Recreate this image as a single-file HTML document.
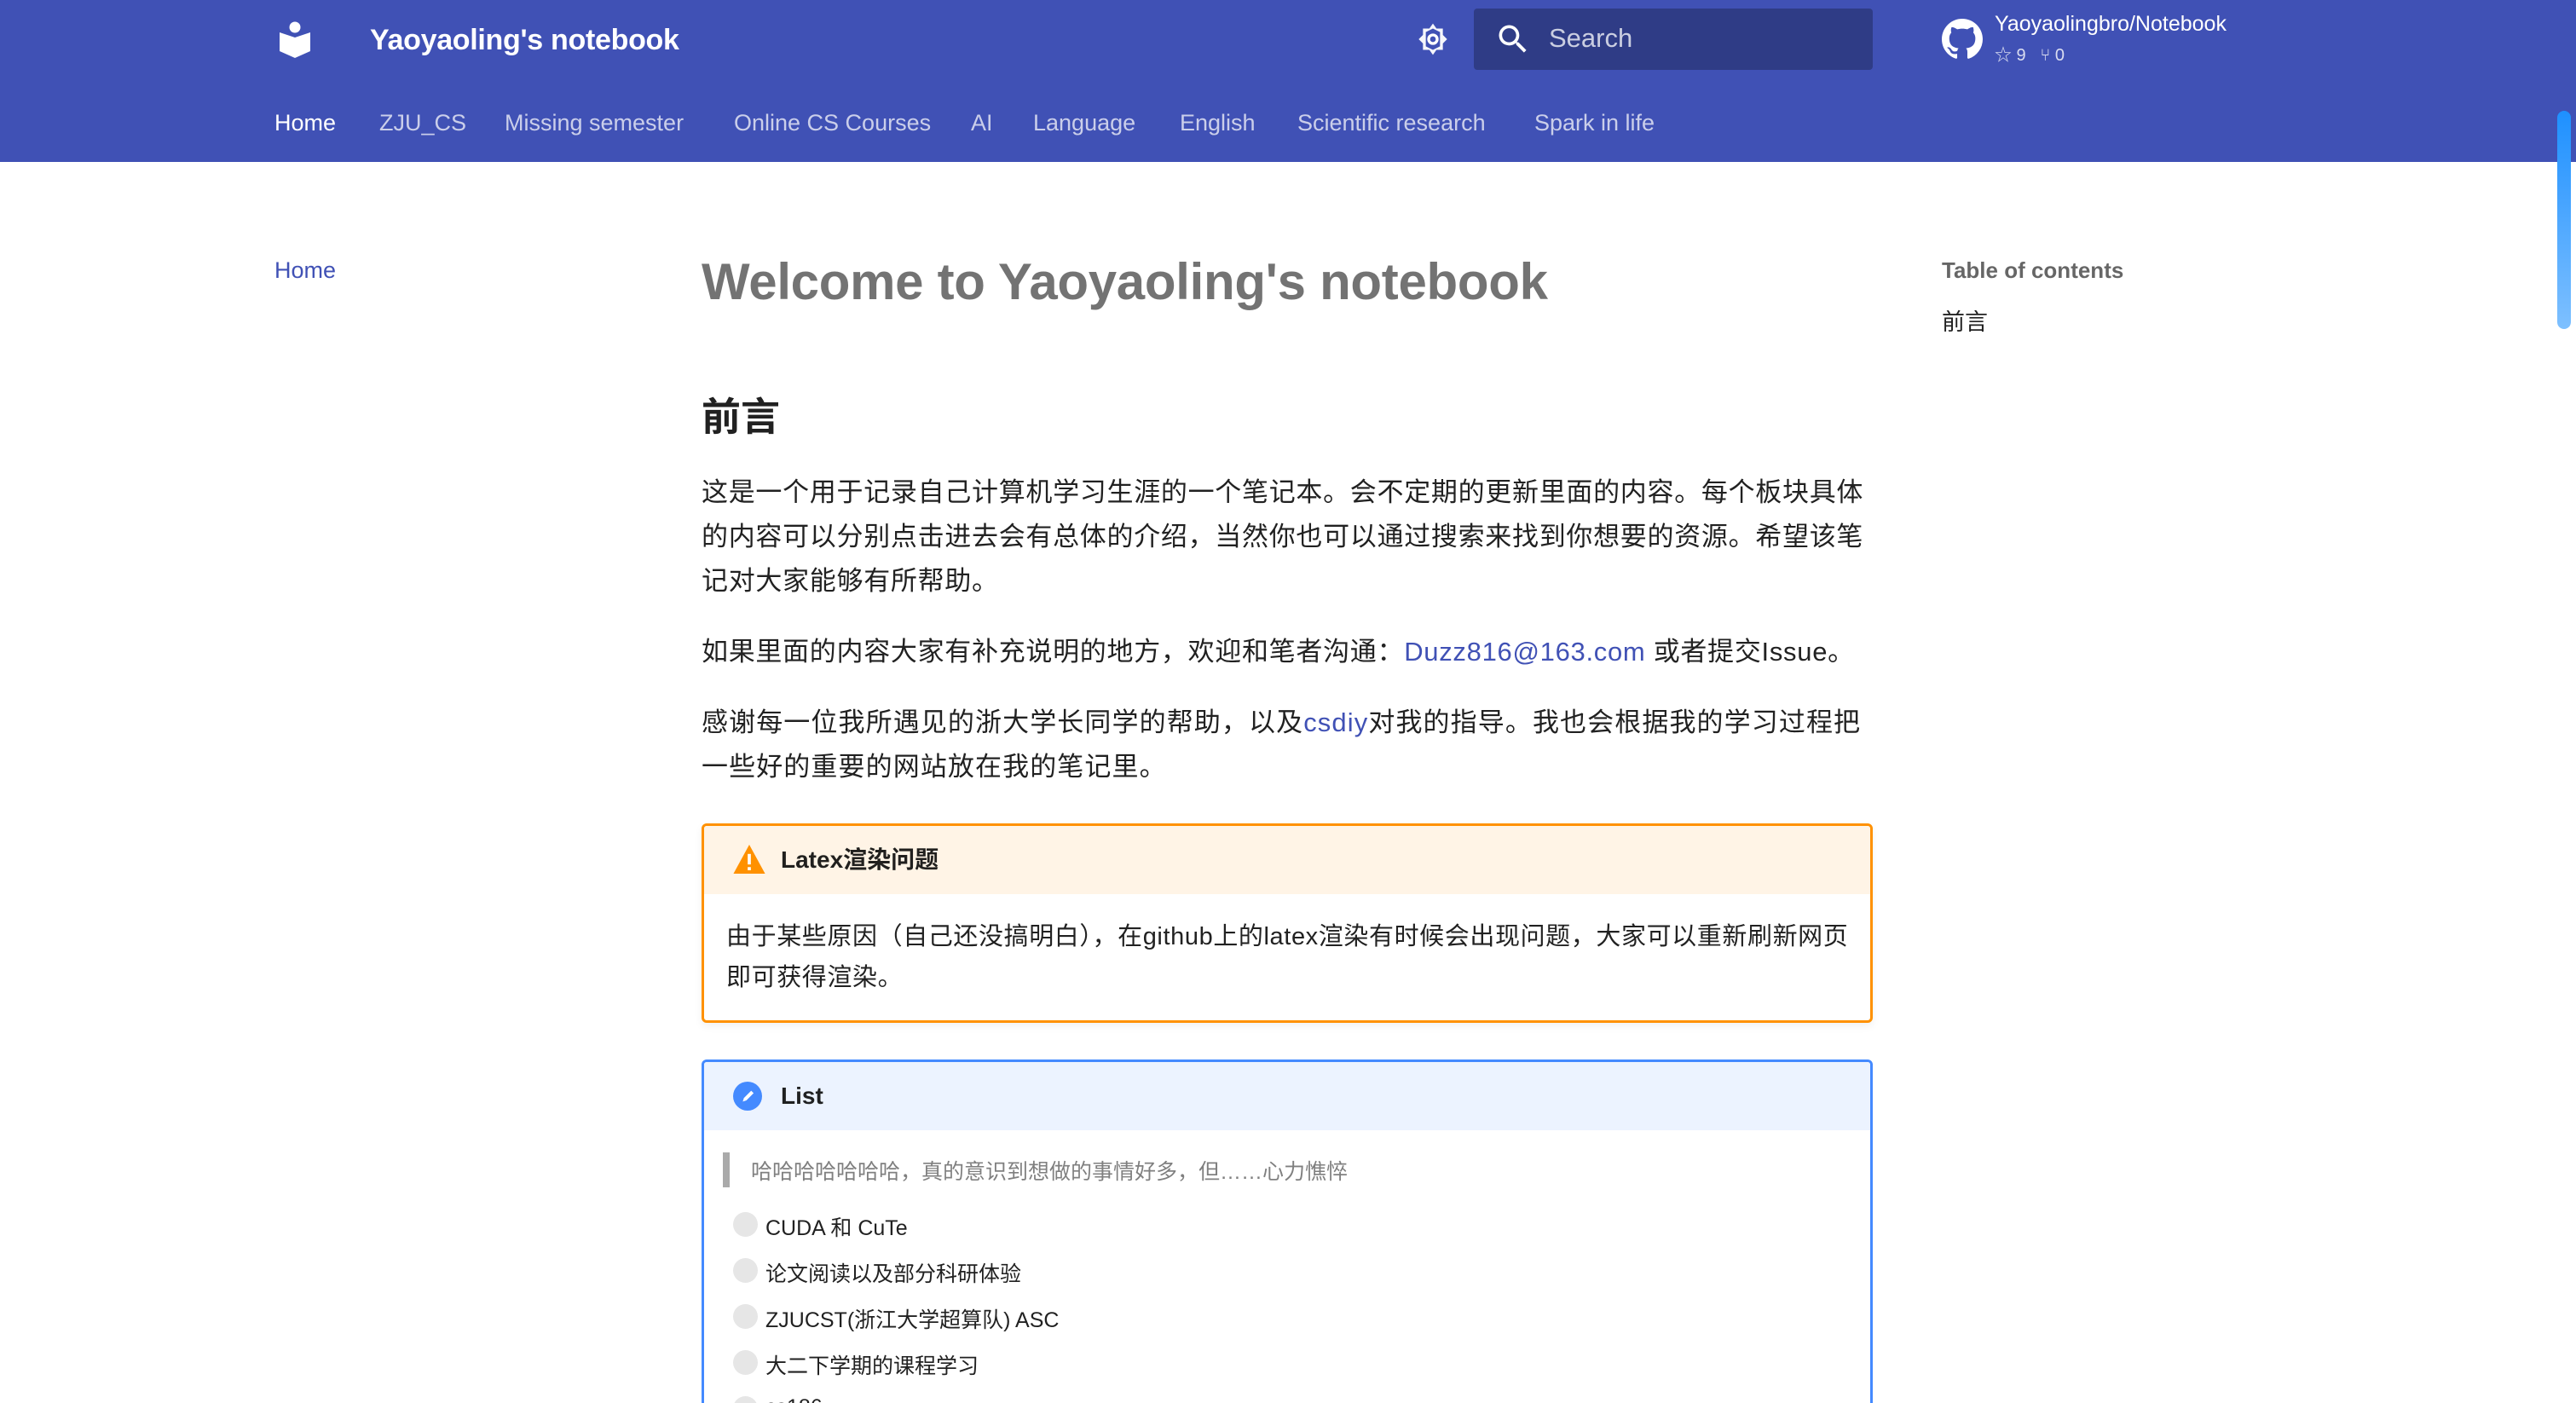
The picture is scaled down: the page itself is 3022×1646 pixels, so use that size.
<!DOCTYPE html>
<html><head><meta charset="utf-8">
<style>
*{margin:0;padding:0;box-sizing:border-box}
html,body{width:3022px;height:1646px;overflow:hidden;background:#fff;font-family:"Liberation Sans","Noto Sans CJK SC",sans-serif;color:rgba(0,0,0,.87)}
#w{position:relative;width:3022px;height:1646px;overflow:hidden}
.hdr{position:absolute;left:0;top:0;width:3022px;height:190px;background:#4051b5}
.abs{position:absolute;white-space:nowrap}
.title{left:434px;top:28px;font-size:34px;font-weight:700;color:#fff;letter-spacing:-0.3px}
.search{left:1729px;top:10px;width:468px;height:72px;background:rgba(0,0,0,.26);border-radius:4px}
.search span{position:absolute;left:88px;top:17px;font-size:31px;color:rgba(255,255,255,.75)}
.nav{top:129px;font-size:27px;color:rgba(255,255,255,.72)}
.repo{left:2340px;top:14px;font-size:25px;color:#fff}
.stats{left:2340px;top:48px;font-size:20px;color:rgba(255,255,255,.8)}
.p{left:823px;font-size:31px;line-height:52px;width:1382px;white-space:normal;letter-spacing:0.7px}
a{color:#4051b5;text-decoration:none}
.adm{position:absolute;left:823px;width:1374px;border-radius:6px;overflow:hidden;box-shadow:0 4px 10px rgba(0,0,0,.06)}
.adm .t{height:80px;font-size:28px;font-weight:700;padding-left:90px;line-height:80px;position:relative}
.cb{position:absolute;left:860px;width:29px;height:29px;border-radius:50%;background:#e6e6e6}
.li{left:898px;font-size:25px}
</style></head><body><div id="w">
<div class="hdr"></div>
<svg class="abs" style="left:326px;top:24px" width="42" height="46" viewBox="0 0 42 46">
<circle cx="20" cy="8" r="6.5" fill="#fff"/>
<path d="M2 14 L20 20 L38 14 L38 36 L20 44 L2 36 Z" fill="#fff"/>
</svg>
<div class="abs title">Yaoyaoling's notebook</div>
<svg class="abs" style="left:1661px;top:26px" width="40" height="40" viewBox="0 0 24 24"><path fill="#fff" d="M12 8a4 4 0 1 1 0 8 4 4 0 0 1 0-8m0 2a2 2 0 1 0 0 4 2 2 0 0 0 0-4M12 1l2.5 3.5H19v4.5l3 3-3 3v4.5h-4.5L12 23l-2.5-3.5H5V15l-3-3 3-3V4.5h4.5Z" opacity=".95"/><path fill="#4051b5" d="M12 4.5 7 7v10l5 2.5 5-2.5V7Z"/><circle cx="12" cy="12" r="4" fill="#fff"/><circle cx="12" cy="12" r="2" fill="#4051b5"/></svg>
<div class="abs search">
<svg style="position:absolute;left:24px;top:14px" width="44" height="44" viewBox="0 0 24 24"><path fill="#fff" d="M9.5 3A6.5 6.5 0 0 1 16 9.5c0 1.61-.59 3.09-1.56 4.23l.27.27h.79l5 5-1.5 1.5-5-5v-.79l-.27-.27A6.516 6.516 0 0 1 9.5 16 6.5 6.5 0 0 1 3 9.5 6.5 6.5 0 0 1 9.5 3m0 2C7 5 5 7 5 9.5S7 14 9.5 14 14 12 14 9.5 12 5 9.5 5Z"/></svg>
<span>Search</span></div>
<svg class="abs" style="left:2278px;top:22px" width="48" height="48" viewBox="0 0 16 16"><path fill="#fff" d="M8 0C3.58 0 0 3.58 0 8c0 3.54 2.29 6.53 5.47 7.590.4.07.55-.17.55-.38 0-.19-.01-.82-.01-1.49-2.01.37-2.53-.49-2.69-.94-.09-.23-.48-.94-.82-1.13-.28-.15-.68-.52-.01-.53.63-.01 1.08.58 1.23.82.72 1.21 1.87.87 2.33.66.07-.52.28-.87.51-1.07-1.78-.2-3.64-.89-3.64-3.95 0-.87.31-1.59.82-2.15-.08-.2-.36-1.02.08-2.12 0 0 .67-.21 2.2.82.64-.18 1.32-.27 2-.27.68 0 1.36.09 2 .27 1.53-1.04 2.2-.82 2.2-.82.44 1.1.16 1.92.08 2.12.51.56.82 1.27.82 2.15 0 3.07-1.87 3.75-3.65 3.95.29.25.54.73.54 1.48 0 1.07-.01 1.93-.01 2.2 0 .21.15.46.55.38A8.013 8.013 0 0 0 16 8c0-4.42-3.58-8-8-8Z"/></svg>
<div class="abs repo">Yaoyaolingbro/Notebook</div>
<div class="abs stats">☆ 9 &nbsp;&nbsp;⑂ 0</div>
<div class="abs nav" style="left:322px;color:#fff">Home</div>
<div class="abs nav" style="left:445px">ZJU_CS</div>
<div class="abs nav" style="left:592px">Missing semester</div>
<div class="abs nav" style="left:861px">Online CS Courses</div>
<div class="abs nav" style="left:1139px">AI</div>
<div class="abs nav" style="left:1212px">Language</div>
<div class="abs nav" style="left:1384px">English</div>
<div class="abs nav" style="left:1522px">Scientific research</div>
<div class="abs nav" style="left:1800px">Spark in life</div>
<div class="abs" style="right:6px;top:130px;width:16px;height:256px;border-radius:8px;background:linear-gradient(#1e90ff,#7ec0ff)"></div>

<div class="abs" style="left:322px;top:302px;font-size:27px;color:#4051b5">Home</div>
<div class="abs" style="left:2278px;top:302px;font-size:26px;font-weight:700;color:rgba(0,0,0,.6)">Table of contents</div>
<div class="abs" style="left:2278px;top:356px;font-size:27px">前言</div>

<div class="abs" style="left:823px;top:296px;font-size:60px;font-weight:700;color:rgba(0,0,0,.55);letter-spacing:-0.3px">Welcome to Yaoyaoling's notebook</div>
<div class="abs" style="left:823px;top:453px;font-size:46px;font-weight:700">前言</div>
<div class="abs p" style="top:552px">这是一个用于记录自己计算机学习生涯的一个笔记本。会不定期的更新里面的内容。每个板块具体的内容可以分别点击进去会有总体的介绍，当然你也可以通过搜索来找到你想要的资源。希望该笔记对大家能够有所帮助。</div>
<div class="abs p" style="top:739px">如果里面的内容大家有补充说明的地方，欢迎和笔者沟通：<a>Duzz816@163.com</a> 或者提交Issue。</div>
<div class="abs p" style="top:822px;letter-spacing:1.1px">感谢每一位我所遇见的浙大学长同学的帮助，以及<a>csdiy</a>对我的指导。我也会根据我的学习过程把一些好的重要的网站放在我的笔记里。</div>

<div class="adm" style="top:966px;height:234px;border:3px solid #ff9100">
<div class="t" style="background:#fff4e6">
<svg style="position:absolute;left:34px;top:22px" width="38" height="34" viewBox="0 0 24 22"><path fill="#ff9100" d="M12 0 24 22H0Z"/><rect x="10.8" y="7" width="2.4" height="8" fill="#fff"/><rect x="10.8" y="17" width="2.4" height="2.4" fill="#fff"/></svg>
Latex渲染问题</div>
<div style="padding:26px 24px 0 26px;font-size:29px;line-height:48px;letter-spacing:0.6px">由于某些原因（自己还没搞明白），在github上的latex渲染有时候会出现问题，大家可以重新刷新网页即可获得渲染。</div>
</div>

<div class="adm" style="top:1243px;height:420px;border:3px solid #448aff;box-shadow:none">
<div class="t" style="background:#ecf3ff">
<svg style="position:absolute;left:34px;top:23px" width="34" height="34" viewBox="0 0 24 24"><circle cx="12" cy="12" r="12" fill="#448aff"/><path d="M8 16.5l1-3 6-6 2 2-6 6z" fill="#fff"/></svg>
List</div>
</div>
<div class="abs" style="left:848px;top:1352px;width:8px;height:41px;background:#aaa"></div>
<div class="abs" style="left:881px;top:1355px;font-size:25px;color:rgba(0,0,0,.5)">哈哈哈哈哈哈哈，真的意识到想做的事情好多，但……心力憔悴</div>
<div class="cb" style="top:1422px"></div><div class="abs li" style="top:1421px">CUDA 和 CuTe</div>
<div class="cb" style="top:1476px"></div><div class="abs li" style="top:1475px">论文阅读以及部分科研体验</div>
<div class="cb" style="top:1530px"></div><div class="abs li" style="top:1529px">ZJUCST(浙江大学超算队) ASC</div>
<div class="cb" style="top:1584px"></div><div class="abs li" style="top:1583px">大二下学期的课程学习</div>
<div class="cb" style="top:1638px"></div><div class="abs li" style="top:1637px">cs186</div>
</div></body></html>
